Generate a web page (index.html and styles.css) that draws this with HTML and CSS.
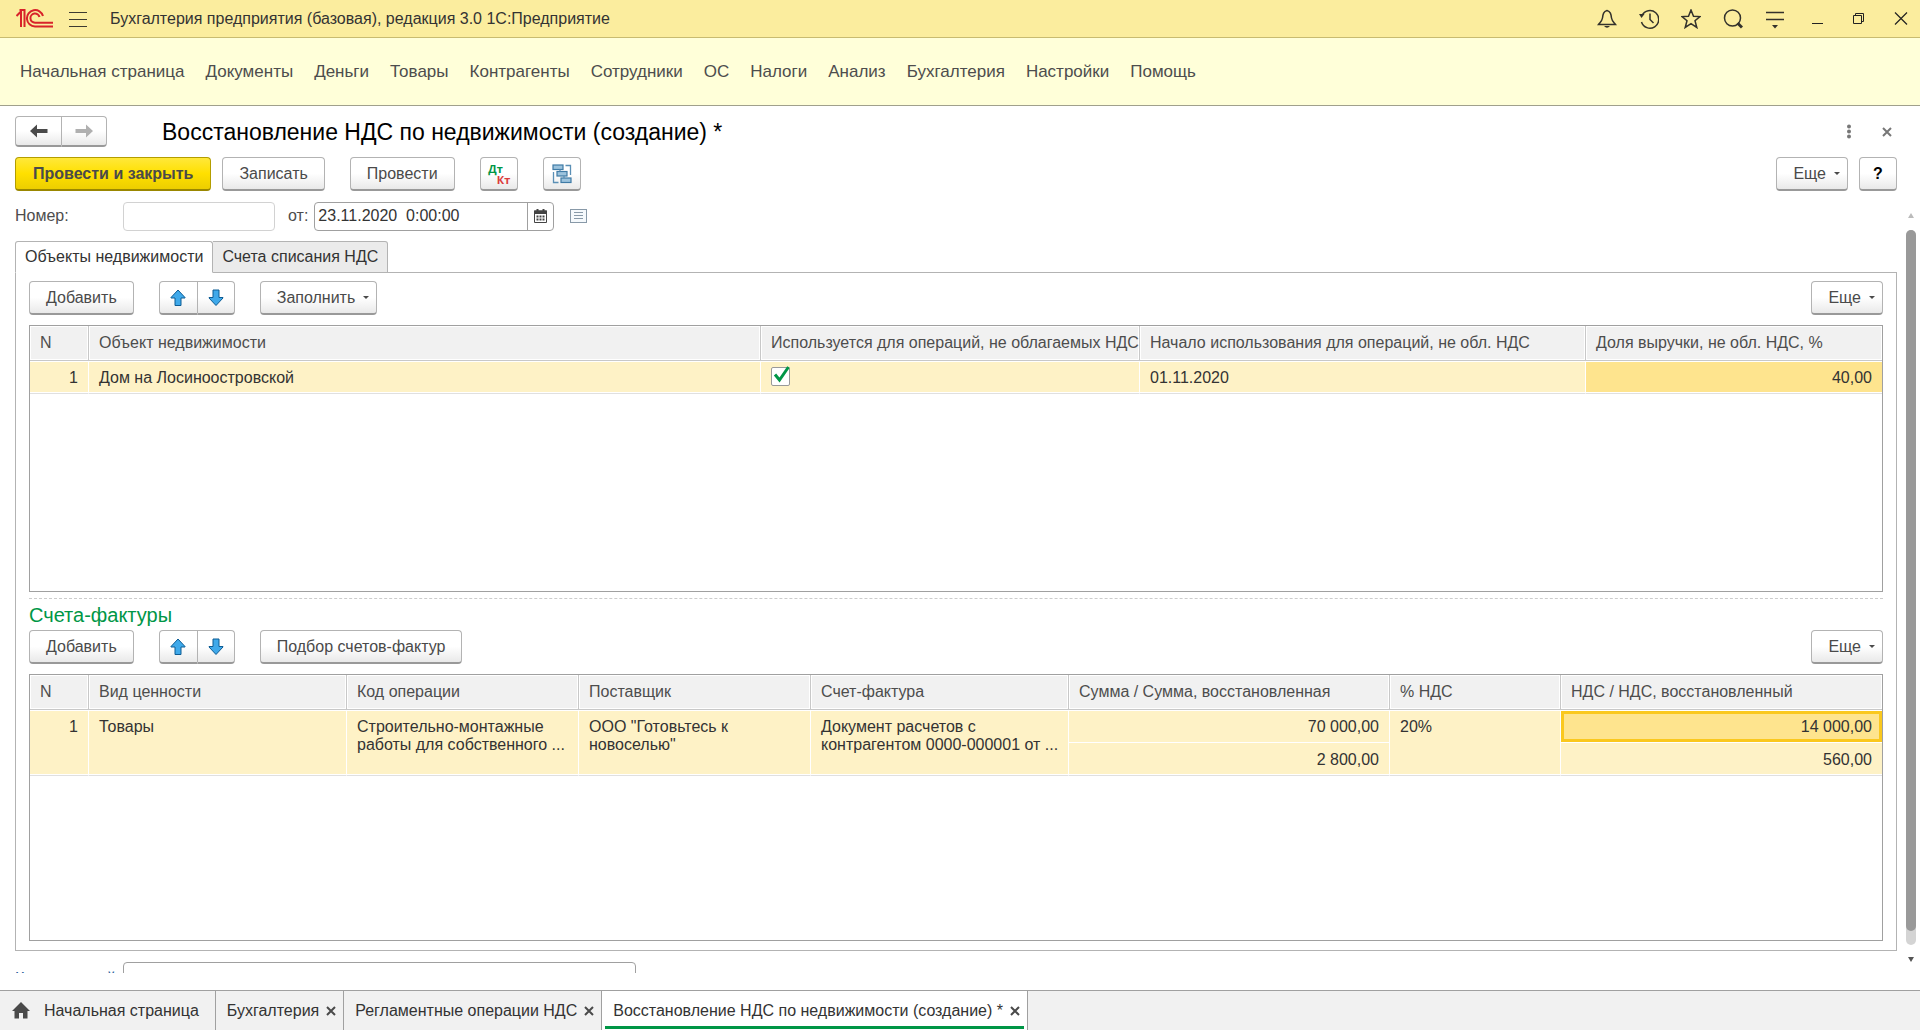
FILE: index.html
```html
<!DOCTYPE html>
<html lang="ru">
<head>
<meta charset="utf-8">
<title>Восстановление НДС по недвижимости (создание)</title>
<meta name="viewport" content="width=device-width, initial-scale=1">
<link rel="stylesheet" href="styles.css">
</head>
<body>
<svg class="sprite" aria-hidden="true">
  <symbol id="arrow-up" viewBox="0 0 16 18"><path d="M8 1 L15 8.500 V9 H11 V16.500 H5 V9 H1 V8.500 Z" fill="#3fa9ea" stroke="#0d5c94" stroke-linejoin="round"/></symbol>
  <symbol id="arrow-down" viewBox="0 0 16 18"><path d="M8 16.500 L15 9 V8.500 H11 V1 H5 V8.500 H1 V9 Z" fill="#3fa9ea" stroke="#0d5c94" stroke-linejoin="round"/></symbol>
  <symbol id="cross" viewBox="0 0 10 10"><path d="M1 1 L9 9 M9 1 L1 9" fill="none" stroke="currentColor" stroke-width="2"/></symbol>
</svg>

<header class="titlebar">
  <svg class="logo" width="38" height="20" viewBox="0 0 38 20" role="img" aria-label="1С"><g fill="none" stroke="#d8232a" stroke-width="2"><path d="M0.500 7 L5 2.500 V18 M8.500 18 V1 L3.500 1"/><path d="M27 7 A8.200 8.200 0 1 0 19 17.500 H37"/><path d="M23.500 8 A4.600 4.600 0 1 0 19 13.700 H37"/></g></svg>
  <button class="icon-btn menu-btn" aria-label="Меню"><svg width="18" height="18" viewBox="0 0 18 18"><path d="M0 2.500 H18 M0 9.500 H18 M0 16.500 H18" stroke="#3c3a30" stroke-width="1.200"/></svg></button>
  <span class="app-name">Бухгалтерия предприятия (базовая), редакция 3.0 1С:Предприятие</span>
  <div class="title-tools">
    <button class="icon-btn" aria-label="Уведомления"><svg width="20" height="20" viewBox="0 0 20 20"><path d="M10 1.500 C6.500 2.500 6 5 5.500 9 C5 12 3.500 13 1.500 15.500 H18.500 C16.500 13 15 12 14.500 9 C14 5 13.500 2.500 10 1.500 Z" fill="none" stroke="#33322c" stroke-width="1.500"/><path d="M7 17 H13 Q10 20.500 7 17 Z" fill="#33322c"/></svg></button>
    <button class="icon-btn" aria-label="История"><svg width="20" height="20" viewBox="0 0 20 20"><g fill="none" stroke="#33322c" stroke-width="1.500"><path d="M3 6.500 A8.800 8.800 0 1 1 2.500 13"/><path d="M11 4.500 V10.500 L14.500 14"/></g><path d="M0 5 L5.500 5 L2.500 9 Z" fill="#33322c"/></svg></button>
    <button class="icon-btn" aria-label="Избранное"><svg width="20" height="20" viewBox="0 0 20 20"><path d="M10 1 L12.500 7.300 L19 7.600 L14 11.800 L15.800 18.500 L10 14.700 L4.200 18.500 L6 11.800 L1 7.600 L7.500 7.300 Z" fill="none" stroke="#33322c" stroke-width="1.500"/></svg></button>
    <button class="icon-btn" aria-label="Поиск"><svg width="20" height="20" viewBox="0 0 20 20"><circle cx="9.500" cy="9" r="8" fill="none" stroke="#33322c" stroke-width="1.500"/><path d="M14.500 14 L19 18.500" stroke="#33322c" stroke-width="3"/></svg></button>
    <button class="icon-btn" aria-label="Настройка"><svg width="20" height="20" viewBox="0 0 20 20"><path d="M1 3.500 H19 M1 10.500 H19" stroke="#33322c" stroke-width="1.500"/><path d="M7 16 H13 L10 19.500 Z" fill="#33322c"/></svg></button>
    <button class="icon-btn" aria-label="Свернуть"><svg width="20" height="20" viewBox="0 0 20 20"><path d="M5 14.500 H16" stroke="#222"/></svg></button>
    <button class="icon-btn" aria-label="Развернуть"><svg width="20" height="20" viewBox="0 0 20 20"><path d="M4.500 6.500 H12.500 V14.500 H4.500 Z M6.500 6 V4.500 H14.500 V12.500 H13" fill="none" stroke="#222"/></svg></button>
    <button class="icon-btn" aria-label="Закрыть"><svg width="20" height="20" viewBox="0 0 20 20"><path d="M4 3.500 L16 15.500 M16 3.500 L4 15.500" stroke="#222" stroke-width="1.200"/></svg></button>
  </div>
</header>

<nav class="sections">
  <a href="#">Начальная страница</a><a href="#">Документы</a><a href="#">Деньги</a><a href="#">Товары</a><a href="#">Контрагенты</a><a href="#">Сотрудники</a><a href="#">ОС</a><a href="#">Налоги</a><a href="#">Анализ</a><a href="#">Бухгалтерия</a><a href="#">Настройки</a><a href="#">Помощь</a>
</nav>

<main class="form">
  <div class="form-head">
    <div class="btn-group nav-group">
      <button class="btn" aria-label="Назад"><svg width="18" height="14" viewBox="0 0 18 14"><path d="M0 7 L7 0.500 V5 H17.500 V9 H7 V13.500 Z" fill="#4a4a4a"/></svg></button><button class="btn" aria-label="Вперед"><svg width="18" height="14" viewBox="0 0 18 14"><path d="M18 7 L11 0.500 V5 H0.500 V9 H11 V13.500 Z" fill="#b0b0b0"/></svg></button>
    </div>
    <h1>Восстановление НДС по недвижимости (создание) *</h1>
    <button class="icon-btn dots" aria-label="Действия"><svg width="6" height="16" viewBox="0 0 6 16"><g fill="#777"><circle cx="3" cy="2.500" r="2"/><circle cx="3" cy="7.500" r="2"/><circle cx="3" cy="12.500" r="2"/></g></svg></button>
    <button class="icon-btn form-close" aria-label="Закрыть форму"><svg width="10" height="10"><use href="#cross"/></svg></button>
  </div>

  <div class="commands">
    <button class="btn primary">Провести и закрыть</button>
    <button class="btn save">Записать</button>
    <button class="btn">Провести</button>
    <button class="btn square dtkt" aria-label="Дт Кт"><span class="dt">Дт</span><span class="kt">Кт</span></button>
    <button class="btn square" aria-label="Структура подчиненности"><svg width="20" height="20" viewBox="0 0 20 20"><g fill="#9cc3dd" stroke="#3f7ba6" stroke-width="1.200"><rect x="1" y="1" width="10" height="4.500"/><rect x="5" y="7.500" width="10" height="4.500"/><rect x="9" y="14" width="10" height="4.500"/></g><path d="M13.500 1.500 H18.500 V11 M1.500 8 V18.500 H6.500 M8 5.500 V7.500 M12 12 V14" fill="none" stroke="#5a8fb5" stroke-width="1.300"/></svg></button>
    <button class="btn more push">Еще<i class="caret"></i></button>
    <button class="btn help">?</button>
  </div>

  <div class="viewport">
    <div class="content">
      <div class="fields">
        <label class="field-label" for="number">Номер:</label>
        <input class="field number" id="number" type="text">
        <label class="from" for="date">от:</label>
        <div class="date-box">
          <input id="date" type="text" value="23.11.2020  0:00:00">
          <button aria-label="Календарь"><svg width="13" height="14" viewBox="0 0 13 14"><path d="M0.500 2 H12.500 V13.500 H0.500 Z" fill="none" stroke="#444"/><path d="M0 1.500 H13 V5 H0 Z M2.500 0 H4.500 V2 H2.500 Z M8.500 0 H10.500 V2 H8.500 Z" fill="#444"/><path d="M2.500 7.500 H10.500 M2.500 10.500 H10.500" stroke="#444" stroke-width="2" stroke-dasharray="2 1"/></svg></button>
        </div>
        <button class="icon-btn list-btn" aria-label="Журнал"><svg width="17" height="14" viewBox="0 0 17 14"><rect x="0.500" y="0.500" width="16" height="13" fill="#f5f9fc" stroke="#8899a8"/><path d="M4 3.500 H13 M4 6.500 H13 M4 9.500 H13" stroke="#8899a8"/></svg></button>
      </div>

      <div class="tabs" role="tablist">
        <button class="tab active" role="tab" aria-selected="true">Объекты недвижимости</button><button class="tab" role="tab" aria-selected="false">Счета списания НДС</button>
      </div>

      <section class="panel">
        <div class="toolbar">
          <button class="btn">Добавить</button>
          <div class="btn-group">
            <button class="btn" aria-label="Вверх"><svg width="16" height="18"><use href="#arrow-up"/></svg></button><button class="btn" aria-label="Вниз"><svg width="16" height="18"><use href="#arrow-down"/></svg></button>
          </div>
          <button class="btn more">Заполнить<i class="caret"></i></button>
          <button class="btn more push">Еще<i class="caret"></i></button>
        </div>
        <div class="grid">
          <table>
            <colgroup><col class="c-n"><col><col class="c-used"><col class="c-start"><col class="c-share"></colgroup>
            <thead><tr><th>N</th><th>Объект недвижимости</th><th>Используется для операций, не облагаемых НДС</th><th>Начало использования для операций, не обл. НДС</th><th>Доля выручки, не обл. НДС, %</th></tr></thead>
            <tbody><tr class="last"><td class="num">1</td><td>Дом на Лосиноостровской</td><td><label class="check"><input type="checkbox" checked aria-label="Используется для операций, не облагаемых НДС"><svg width="18" height="17" viewBox="0 0 18 17"><path d="M2 8.500 L6.500 14 L15.500 1" fill="none" stroke="#009646" stroke-width="3"/></svg></label></td><td>01.11.2020</td><td class="num current">40,00</td></tr></tbody>
          </table>
        </div>

        <hr class="splitter">
        <h2>Счета-фактуры</h2>
        <div class="toolbar">
          <button class="btn">Добавить</button>
          <div class="btn-group">
            <button class="btn" aria-label="Вверх"><svg width="16" height="18"><use href="#arrow-up"/></svg></button><button class="btn" aria-label="Вниз"><svg width="16" height="18"><use href="#arrow-down"/></svg></button>
          </div>
          <button class="btn">Подбор счетов-фактур</button>
          <button class="btn more push">Еще<i class="caret"></i></button>
        </div>
        <div class="grid">
          <table>
            <colgroup><col class="c-n"><col><col class="c-text"><col class="c-text"><col class="c-invoice"><col class="c-sum"><col class="c-rate"><col class="c-vat"></colgroup>
            <thead><tr><th>N</th><th>Вид ценности</th><th>Код операции</th><th>Поставщик</th><th>Счет-фактура</th><th>Сумма / Сумма, восстановленная</th><th>% НДС</th><th>НДС / НДС, восстановленный</th></tr></thead>
            <tbody>
              <tr class="pair"><td class="num end" rowspan="2">1</td><td class="end" rowspan="2">Товары</td><td class="end" rowspan="2">Строительно-монтажные<br>работы для собственного ...</td><td class="end" rowspan="2">ООО "Готовьтесь к<br>новоселью"</td><td class="end" rowspan="2">Документ расчетов с<br>контрагентом 0000-000001 от ...</td><td class="num">70 000,00</td><td class="end" rowspan="2">20%</td><td class="num current focus">14 000,00</td></tr>
              <tr class="pair last"><td class="num">2 800,00</td><td class="num">560,00</td></tr>
            </tbody>
          </table>
        </div>
      </section>

      <div class="fields comment-row">
        <label class="field-label link" for="comment">Комментарий:</label>
        <input class="field comment" id="comment" type="text">
      </div>
    </div>
    <div class="scrollbar" aria-hidden="true"><i class="tri up"></i><div class="track"><div class="thumb"></div></div><i class="tri down"></i></div>
  </div>
</main>

<footer class="windows">
  <a class="win home" href="#"><svg width="18" height="17" viewBox="0 0 18 17"><path d="M9 0 L18 9 H15.500 V16.500 H11 V11 H7 V16.500 H2.500 V9 H0 Z" fill="#4a4a4a"/></svg>Начальная страница</a>
  <div class="win"><a href="#">Бухгалтерия</a><button class="icon-btn" aria-label="Закрыть"><svg width="10" height="10"><use href="#cross"/></svg></button></div>
  <div class="win"><a href="#">Регламентные операции НДС</a><button class="icon-btn" aria-label="Закрыть"><svg width="10" height="10"><use href="#cross"/></svg></button></div>
  <div class="win active"><a href="#">Восстановление НДС по недвижимости (создание) *</a><button class="icon-btn" aria-label="Закрыть"><svg width="10" height="10"><use href="#cross"/></svg></button></div>
</footer>
</body>
</html>
```
FILE: styles.css
```css
* { box-sizing: border-box; }

body {
  margin: 0;
  height: 100vh;
  display: flex;
  flex-direction: column;
  overflow: hidden;
  background: #fff;
  color: #333;
  font: 16px/18px "Liberation Sans", Arial, sans-serif;
}

button, input { font: inherit; color: inherit; }
a { color: inherit; text-decoration: none; }
svg { display: block; flex: none; }
.sprite { position: absolute; width: 0; height: 0; }

.icon-btn {
  display: flex;
  align-items: center;
  justify-content: center;
  padding: 0;
  border: 0;
  background: none;
  color: #4a4a4a;
}

/* Title bar */
.titlebar {
  flex: none;
  display: flex;
  align-items: center;
  height: 38px;
  padding: 0 9px 0 16px;
  border-bottom: 1px solid #c8bb70;
  background: #fbed9e;
}
.menu-btn { margin: 0 23px 0 15px; }
.title-tools { display: flex; gap: 22px; margin-left: auto; }

/* Sections */
.sections {
  flex: none;
  display: flex;
  align-items: center;
  gap: 21px;
  height: 68px;
  padding: 0 20px;
  border-bottom: 1px solid #a0a08c;
  background: #ffffd9;
  color: #4d4d4d;
  font-size: 17px;
}

/* Form */
.form {
  flex: 1;
  min-height: 0;
  display: flex;
  flex-direction: column;
  padding: 10px 0 17px 15px;
}
.form-head { display: flex; align-items: center; padding-right: 28px; }
h1 { margin: 0 0 0 55px; font-size: 23px; line-height: 28px; font-weight: 400; color: #000; }
.dots { margin-left: auto; }
.form-close { margin-left: 30px; color: #777; }

.btn {
  flex: none;
  display: flex;
  align-items: center;
  justify-content: center;
  height: 34px;
  padding: 0 16px;
  border: 1px solid #b3b3b3;
  border-bottom: 2px solid #999;
  border-radius: 4px;
  background: linear-gradient(#fff 50%, #e9e9e9);
  color: #4a4a4a;
}
.btn.primary {
  padding: 0 17px;
  border-color: #b39d00;
  border-bottom-color: #9a8700;
  background: linear-gradient(#ffe83a, #ffe000 50%, #ecce00);
  font-weight: 700;
}
.btn.square { width: 38px; padding: 0; }
.btn.help { width: 38px; padding: 0; color: #000; font-weight: 700; }
.btn.more { gap: 8px; padding: 0 7px 0 16px; }
.push { margin-left: auto; }
.caret { border: 3px solid transparent; border-top-color: #4a4a4a; border-bottom: 0; }

.btn-group { display: flex; }
.btn-group .btn { width: 37px; padding: 0; }
.btn-group .btn:first-child { width: 39px; border-radius: 4px 0 0 4px; }
.btn-group .btn:last-child { border-left: 0; border-radius: 0 4px 4px 0; }
.nav-group .btn:last-child { width: 45px; height: 31px; }
.nav-group .btn:first-child { width: 47px; height: 31px; }

.commands { display: flex; gap: 25px; padding: 10px 23px 10px 0; }
.commands .save { margin-left: -14px; }
.commands .help { margin-left: -14px; }
.dtkt { flex-direction: column; font: 700 11px/11px "Open Sans", sans-serif; }
.dt { margin-right: 6px; color: #009646; }
.kt { margin-left: 10px; color: #dc3c3c; }

/* Scrolled part */
.viewport { flex: 1; min-height: 0; display: flex; overflow: hidden; }
.content { flex: 1; min-width: 0; }

.fields { display: flex; align-items: center; height: 30px; color: #4d4d4d; }
.field-label { width: 108px; }
.field-label.link { padding-top: 6px; color: #1f5c99; }
.field { height: 29px; padding: 0 4px; border: 1px solid #a0a0a0; border-radius: 4px; background: #fff; }
.number { width: 152px; border-color: #d2d2d2; }
.comment { width: 513px; }
.from { margin: 0 6px 0 13px; }
.date-box { display: flex; width: 240px; height: 29px; border: 1px solid #a0a0a0; border-radius: 4px; }
.date-box input { flex: 1; min-width: 0; padding: 0 3px; border: 0; background: none; color: #333; white-space: pre; }
.date-box button { display: flex; align-items: center; justify-content: center; width: 26px; padding: 0; border: 0; border-left: 1px solid #a0a0a0; background: none; }
.list-btn { margin-left: 16px; }

.tabs { display: flex; padding-top: 10px; }
.tab {
  position: relative;
  height: 32px;
  padding: 0 9px;
  border: 1px solid #b3b3b3;
  border-left: 0;
  border-radius: 0 3px 0 0;
  background: #ebebeb;
}
.tab.active { border-left: 1px solid #b3b3b3; border-bottom-color: #fff; border-radius: 3px 3px 0 0; background: #fff; }

.panel {
  margin: -1px 23px 0 0;
  padding: 8px 13px 9px;
  border: 1px solid #b3b3b3;
}
.toolbar { display: flex; gap: 25px; }

.grid { min-height: 267px; margin-top: 10px; border: 1px solid #a0a0a0; }
table { width: 100%; table-layout: fixed; border-collapse: separate; border-spacing: 0; }
th, td { padding: 0 10px; text-align: left; white-space: nowrap; overflow: hidden; }
th {
  height: 35px;
  padding-right: 0;
  border-right: 1px solid #c8c8c8;
  border-bottom: 1px solid #c8c8c8;
  background: #f1f1f1;
  box-shadow: inset 0 0 0 1px #fff;
  font-weight: 400;
  color: #4d4d4d;
}
td {
  height: 33px;
  border-top: 1px solid #fff;
  border-right: 1px solid #fff;
  background: #fef2c6;
  vertical-align: top;
  padding-top: 7px;
}
th:last-child, td:last-child { border-right: 0; }
.last td, td.end { border-bottom: 1px solid #e0e0e0; box-shadow: inset 0 -1px #fff; }
.pair td { height: 32px; }
.pair.last td { height: 34px; padding-top: 8px; }
.num { text-align: right; }
td.current { background: #fee48e; }
td.focus { box-shadow: inset 0 0 0 3px #fac81e; }

.c-n { width: 59px; }
.c-used { width: 379px; }
.c-start { width: 446px; }
.c-share { width: 296px; }
.c-text { width: 232px; }
.c-invoice { width: 258px; }
.c-sum { width: 321px; }
.c-rate { width: 171px; }
.c-vat { width: 321px; }

.check { position: relative; display: block; width: 19px; height: 19px; margin-top: -2px; }
.check input { appearance: none; display: block; width: 19px; height: 19px; margin: 0; border: 1px solid #999; border-radius: 2px; background: #fff; }
.check svg { position: absolute; left: 2px; top: -1px; }

.splitter { margin: 6px 0 0; border: 0; border-top: 1px dashed #ccc; }
h2 { margin: 5px 0 3px; font-size: 20px; line-height: 23px; font-weight: 400; color: #009646; }

.comment-row { margin-top: 10px; }

/* Scrollbar */
.scrollbar { display: flex; flex-direction: column; align-items: center; width: 10px; margin: 12px 4px 11px -14px; }
.track { flex: 1; width: 10px; margin: 12px 0; border-radius: 5px; background: #d4d4d4; }
.thumb { height: 98%; border-radius: 5px; background: #999; }
.tri { border: 3px solid transparent; }
.tri.up { border-top: 0; border-bottom: 5px solid #bbb; }
.tri.down { border-bottom: 0; border-top: 5px solid #555; }

/* Open windows */
.windows { flex: none; display: flex; height: 40px; border-top: 1px solid #a0a0a0; background: #f1f1f1; }
.win { display: flex; align-items: center; gap: 7px; padding: 0 7px 0 11px; border-right: 1px solid #a0a0a0; }
.win.home { gap: 14px; padding: 0 16px 0 12px; }
.win.active { background: linear-gradient(#009646, #009646) 50% calc(100% - 1px) / calc(100% - 6px) 3px no-repeat #fff; }
```
